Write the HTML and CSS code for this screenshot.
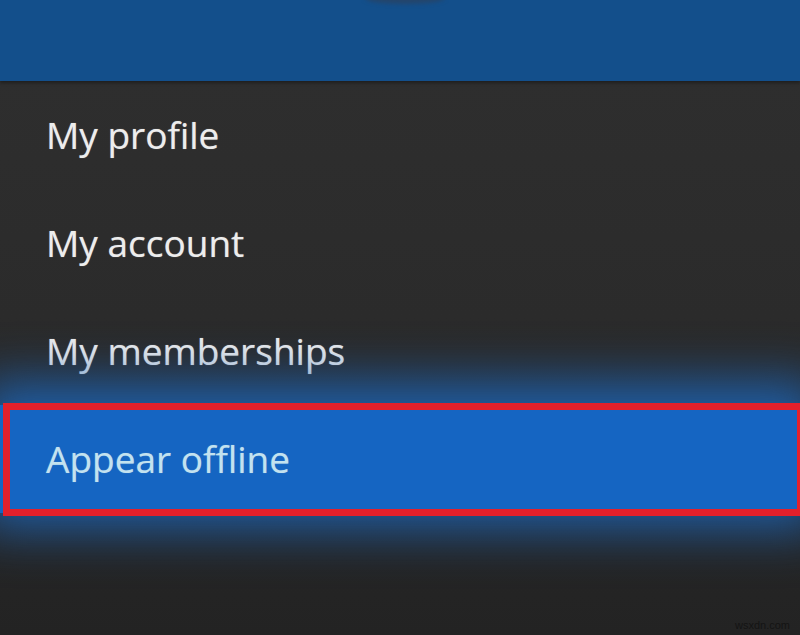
FILE: index.html
```html
<!DOCTYPE html>
<html lang="en">
<head>
<meta charset="utf-8">
<title>Profile menu</title>
<link rel="stylesheet" href="styles.css">
</head>
<body>
<div class="screen">
  <header class="header">
    <div class="avatar-stub"></div>
  </header>
  <ul class="menu">
    <li class="item">My profile</li>
    <li class="item">My account</li>
    <li class="item">My memberships</li>
    <li class="item active">Appear offline</li>
  </ul>
  <div class="watermark">wsxdn.com</div>
</div>
</body>
</html>
```

FILE: styles.css
```css
html, body {
  margin: 0;
  padding: 0;
  background: #262626;
}

.screen {
  position: relative;
  width: 800px;
  height: 635px;
  overflow: hidden;
  display: flex;
  flex-direction: column;
  background: linear-gradient(to bottom, #2f2f2f 0%, #2b2b2b 50%, #232323 100%);
  font-family: "Open Sans", "Noto Sans", sans-serif;
}

.header {
  position: relative;
  height: 81px;
  flex: none;
  background: #134f8b;
  box-shadow: 0 2px 3px rgba(0, 0, 0, 0.35);
  z-index: 2;
}

.avatar-stub {
  position: absolute;
  left: 365px;
  top: -8px;
  width: 80px;
  height: 12px;
  border-radius: 50%;
  background: #24456b;
  filter: blur(2px);
}

.menu {
  list-style: none;
  margin: 0;
  padding: 0;
  display: flex;
  flex-direction: column;
}

.item {
  height: 108px;
  display: flex;
  align-items: center;
  padding-left: 46px;
  padding-bottom: 2px;
  box-sizing: border-box;
  font-size: 37px;
  letter-spacing: 0;
  color: #ededed;
  text-shadow: 0 0 1px rgba(255, 255, 255, 0.5);
}

.item.active {
  position: relative;
  background: #1565c2;
  color: #c3e2ef;
  text-shadow: 0 0 1px rgba(195, 226, 239, 0.5);
  box-shadow: 0 -4px 50px 20px rgba(30, 100, 180, 0.9);
}

.item.active::after {
  content: "";
  position: absolute;
  left: 3px;
  right: -4px;
  top: -2px;
  bottom: -3px;
  border: 7px solid #e3202b;
}

.watermark {
  position: absolute;
  right: 10px;
  bottom: 4px;
  font-family: "Liberation Sans", Arial, sans-serif;
  font-size: 11px;
  color: #141414;
}
```
